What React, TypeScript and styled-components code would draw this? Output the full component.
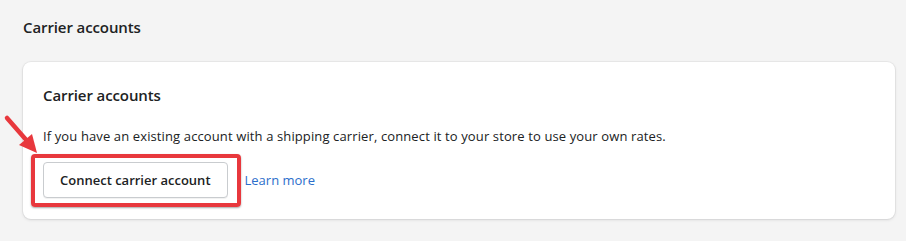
import React from "react";
import styled, { createGlobalStyle } from "styled-components";

const Global = createGlobalStyle`
  html, body {
    margin: 0;
    padding: 0;
    background: #f4f4f4;
  }
  body {
    font-family: "Open Sans", "Noto Sans", "Liberation Sans", sans-serif;
    color: #202223;
  }
`;

const Page = styled.div`
  position: relative;
  box-sizing: border-box;
  width: 906px;
  height: 241px;
  padding: 17px 11px 0 23px;
  display: flex;
  flex-direction: column;
`;

const PageTitle = styled.h1`
  margin: 0 0 25px 0;
  font-size: 15px;
  line-height: 20px;
  font-weight: 600;
  letter-spacing: -0.1px;
  color: #202223;
`;

const Card = styled.section`
  background: #ffffff;
  border-radius: 8px;
  box-shadow: 0 0 0 1px rgba(63, 63, 68, 0.05), 0 1px 3px 0 rgba(63, 63, 68, 0.15);
  padding: 23px 20px 21px 20px;
  display: flex;
  flex-direction: column;
`;

const CardTitle = styled.h2`
  margin: 0 0 21px 0;
  font-size: 15px;
  line-height: 20px;
  font-weight: 600;
  letter-spacing: -0.1px;
  color: #202223;
`;

const Body = styled.p`
  margin: 0 0 16px 0;
  font-size: 13px;
  line-height: 20px;
  letter-spacing: 0.12px;
  color: #202223;
`;

const Actions = styled.div`
  display: flex;
  align-items: center;
  gap: 17px;
`;

const ButtonWrap = styled.div`
  position: relative;
  display: inline-flex;
`;

const Button = styled.button`
  box-sizing: border-box;
  height: 36px;
  padding: 0 16px;
  background: #ffffff;
  border: 1px solid #c9cccf;
  border-radius: 4px;
  box-shadow: 0 1px 0 rgba(0, 0, 0, 0.05);
  font-family: inherit;
  font-size: 13px;
  font-weight: 600;
  color: #202223;
  cursor: pointer;
`;

const Highlight = styled.div`
  position: absolute;
  left: -12px;
  top: -8px;
  right: -13px;
  bottom: -9px;
  border: 4px solid #e8383d;
  border-radius: 4px;
  box-shadow: 0 1px 2px rgba(0, 0, 0, 0.35);
  pointer-events: none;
`;

const LinkText = styled.a`
  font-size: 13px;
  line-height: 20px;
  color: #2c6ecb;
  text-decoration: none;
`;

const Arrow = styled.svg`
  position: absolute;
  left: 2px;
  top: 114px;
  overflow: visible;
`;

export default function App() {
  return (
    <>
      <Global />
      <Page>
        <PageTitle>Carrier accounts</PageTitle>
        <Card>
          <CardTitle>Carrier accounts</CardTitle>
          <Body>
            If you have an existing account with a shipping carrier, connect it to your store to use your own rates.
          </Body>
          <Actions>
            <ButtonWrap>
              <Button>Connect carrier account</Button>
              <Highlight />
            </ButtonWrap>
            <LinkText href="#">Learn more</LinkText>
          </Actions>
        </Card>
        <Arrow width="40" height="42" viewBox="0 0 40 42">
          <line x1="5" y1="4" x2="26" y2="28" stroke="#e8383d" strokeWidth="4.5" strokeLinecap="round" />
          <polygon points="35,39 17,31 30,20" fill="#e8383d" />
        </Arrow>
      </Page>
    </>
  );
}
